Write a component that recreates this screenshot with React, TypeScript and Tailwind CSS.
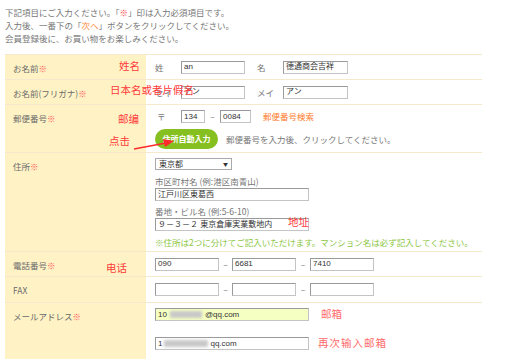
import React from "react";

const jp = { fontFamily: '"Noto Sans CJK JP", "Noto Sans", sans-serif' };

function Req() {
  return <span className="text-[#ff5a5a]">※</span>;
}

function Field({ w, value, bg }: { w: string; value?: string; bg?: string }) {
  return (
    <div
      className={`${w} ${bg ?? "bg-white"} h-[13px] border border-[#c4c4c4] border-t-[#9a9a9a] border-l-[#9a9a9a] flex items-center px-[2px] text-[8px] text-[#333] leading-none whitespace-nowrap overflow-hidden`}
      style={{ fontFamily: '"Liberation Sans", "Noto Sans CJK JP", sans-serif' }}
    >
      {value}
    </div>
  );
}

function Row({
  h,
  label,
  children,
  last,
}: {
  h: string;
  label: React.ReactNode;
  children: React.ReactNode;
  last?: boolean;
}) {
  return (
    <div className={`flex ${h} ${last ? "" : "border-b border-[#f6e8cc]"}`}>
      <div className="w-[141px] shrink-0 bg-[#fff3c6] pl-[8px] pt-[7px] text-[8.5px] text-[#6a6a6a] leading-[12px]">
        {label}
      </div>
      <div className="flex-1 pl-[9px] text-[8.5px] text-[#777]">{children}</div>
    </div>
  );
}

function Blur({ w }: { w: string }) {
  return <span className={`${w} h-[7px] bg-[#c8c8c8] blur-[1.5px] inline-block`} />;
}

export default function App() {
  return (
    <div className="relative w-[507px] h-[363px] bg-white overflow-hidden" style={jp}>
      {/* intro */}
      <div className="pl-[5px] pt-[6px] text-[8.5px] leading-[13px] text-[#777]">
        <p>
          下記項目にご入力ください。「<span className="text-[#ff4040]">※</span>」印は入力必須項目です。
        </p>
        <p>
          入力後、一番下の「<span className="text-[#ff8a3c]">次へ</span>」ボタンをクリックしてください。
        </p>
        <p>会員登録後に、お買い物をお楽しみください。</p>
      </div>

      {/* form table */}
      <div className="ml-[5px] mt-[9px] w-[477px] border-t border-[#f6e8cc]">
        <Row h="h-[25px]" label={<>お名前<Req /></>}>
          <div className="flex items-center h-full">
            <span className="w-[26px]">姓</span>
            <Field w="w-[64px]" value="an" />
            <span className="w-[26px] ml-[12px]">名</span>
            <Field w="w-[65px]" value="德通商会吉祥" />
          </div>
        </Row>
        <Row h="h-[25px]" label={<>お名前(フリガナ)<Req /></>}>
          <div className="flex items-center h-full">
            <span className="w-[26px]">セイ</span>
            <Field w="w-[64px]" value="アン" />
            <span className="w-[26px] ml-[12px]">メイ</span>
            <Field w="w-[65px]" value="アン" />
          </div>
        </Row>
        <Row h="h-[48px]" label={<>郵便番号<Req /></>}>
          <div className="flex items-center mt-[5px] h-[13px]">
            <span className="w-[26px] pl-[2px]">〒</span>
            <Field w="w-[24px]" value="134" />
            <span className="w-[15px] text-center">–</span>
            <Field w="w-[31px]" value="0084" />
            <span className="ml-[12px] text-[#ff7a2a]">郵便番号検索</span>
          </div>
          <div className="flex items-center mt-[6px]">
            <div className="h-[20px] w-[63px] rounded-full bg-[#86c020] text-white text-[8px] font-bold flex items-center justify-center">
              住所自動入力
            </div>
            <span className="ml-[8px] text-[#777]">郵便番号を入力後、クリックしてください。</span>
          </div>
        </Row>
        <Row h="h-[99px]" label={<>住所<Req /></>}>
          <div className="pt-[5px]">
            <div className="w-[77px] h-[12px] border border-[#aaa] bg-white flex items-center justify-between px-[3px] text-[8px] text-[#333]">
              <span>東京都</span>
              <span className="text-[5px]">▼</span>
            </div>
            <p className="mt-[5px] leading-[12px]">市区町村名 (例:港区南青山)</p>
            <div className="mt-[1px]">
              <Field w="w-[154px]" value="江戸川区東葛西" />
            </div>
            <p className="mt-[4px] leading-[12px]">番地・ビル名 (例:5-6-10)</p>
            <div className="mt-[1px]">
              <Field w="w-[154px]" value="９－３－２ 東京倉庫実業敷地内" />
            </div>
            <p className="mt-[5px] text-[8.5px] leading-[12px] text-[#8cc63f] whitespace-nowrap">
              ※住所は2つに分けてご記入いただけます。マンション名は必ず記入してください。
            </p>
          </div>
        </Row>
        <Row h="h-[25px]" label={<>電話番号<Req /></>}>
          <div className="flex items-center h-full">
            <Field w="w-[64px]" value="090" />
            <span className="w-[13px] text-center">–</span>
            <Field w="w-[64px]" value="6681" />
            <span className="w-[14px] text-center">–</span>
            <Field w="w-[64px]" value="7410" />
          </div>
        </Row>
        <Row h="h-[26px]" label="FAX">
          <div className="flex items-center h-full">
            <Field w="w-[64px]" />
            <span className="w-[13px] text-center">–</span>
            <Field w="w-[64px]" />
            <span className="w-[14px] text-center">–</span>
            <Field w="w-[64px]" />
          </div>
        </Row>
        <Row h="h-[56px]" label={<>メールアドレス<Req /></>} last>
          <div className="pt-[5px]">
            <div className="w-[154px] h-[13px] bg-[#f6ffc2] border border-[#c4c4c4] border-t-[#9a9a9a] border-l-[#9a9a9a] flex items-center px-[2px] text-[8px] text-[#333]" style={{ fontFamily: '"Liberation Sans", sans-serif' }}>
              10<Blur w="w-[32px] mx-[3px]" />@qq.com
            </div>
            <div className="mt-[16px] w-[154px] h-[13px] bg-white border border-[#c4c4c4] border-t-[#9a9a9a] border-l-[#9a9a9a] flex items-center px-[2px] text-[8px] text-[#333]" style={{ fontFamily: '"Liberation Sans", sans-serif' }}>
              1<Blur w="w-[44px] mx-[2px]" />qq.com
            </div>
          </div>
        </Row>
      </div>

      {/* red annotations */}
      <div className="absolute inset-0 pointer-events-none text-[#ff3a3a] text-[10.5px]" style={{ fontFamily: '"Noto Sans CJK SC", sans-serif' }}>
        <span className="absolute left-[119px] top-[58px]">姓名</span>
        <span className="absolute left-[110px] top-[82px]">日本名或者片假名</span>
        <span className="absolute left-[118px] top-[111px]">邮编</span>
        <span className="absolute left-[109px] top-[133px]">点击</span>
        <span className="absolute left-[288px] top-[214px]">地址</span>
        <span className="absolute left-[106px] top-[260px]">电话</span>
        <span className="absolute left-[321px] top-[306px] text-[#ff6a6a]">邮箱</span>
        <span className="absolute left-[318px] top-[335px] text-[#ff6a6a] tracking-[1px]">再次输入邮箱</span>
        <svg className="absolute left-0 top-0" width="507" height="363">
          <line x1="134" y1="149" x2="166" y2="143" stroke="#ff2a2a" strokeWidth="1.4" />
          <polygon points="174,141 163,139 165,147" fill="#ff2a2a" />
        </svg>
      </div>
    </div>
  );
}
